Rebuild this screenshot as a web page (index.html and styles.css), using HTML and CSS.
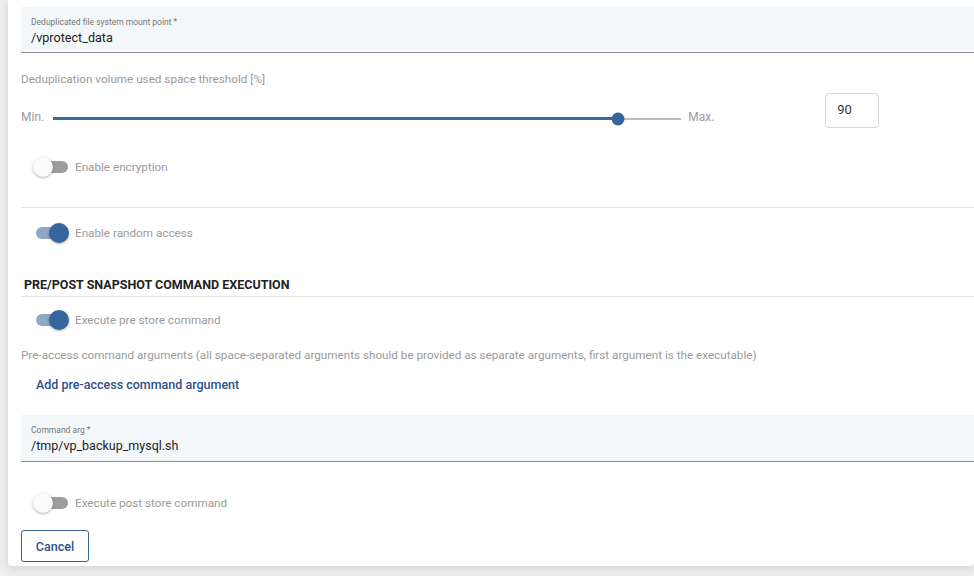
FILE: index.html
```html
<!DOCTYPE html>
<html>
<head>
<meta charset="utf-8">
<link rel="stylesheet" href="styles.css">
</head>
<body>
<div class="card">
  <div class="field">
    <div class="field-label">Deduplicated file system mount point *</div>
    <div class="field-value">/vprotect_data</div>
  </div>

  <div class="hint slider-title">Deduplication volume used space threshold [%]</div>
  <div class="slider-row">
    <span class="minmax">Min.</span>
    <div class="track">
      <div class="track-fill" style="width: 90%"></div>
      <div class="thumb" style="left: 90%"></div>
    </div>
    <span class="minmax">Max.</span>
    <div class="num-input">90</div>
  </div>

  <div class="toggle-row first">
    <span class="toggle off"><span class="knob"></span></span>
    <span class="toggle-label">Enable encryption</span>
  </div>
  <div class="divider"></div>
  <div class="toggle-row">
    <span class="toggle on"><span class="knob"></span></span>
    <span class="toggle-label">Enable random access</span>
  </div>

  <div class="section-title">PRE/POST SNAPSHOT COMMAND EXECUTION</div>
  <div class="toggle-row pre">
    <span class="toggle on"><span class="knob"></span></span>
    <span class="toggle-label">Execute pre store command</span>
  </div>
  <div class="hint args">Pre-access command arguments (all space-separated arguments should be provided as separate arguments, first argument is the executable)</div>
  <div class="add-link">Add pre-access command argument</div>

  <div class="field cmd">
    <div class="field-label">Command arg *</div>
    <div class="field-value">/tmp/vp_backup_mysql.sh</div>
  </div>

  <div class="toggle-row post">
    <span class="toggle off"><span class="knob"></span></span>
    <span class="toggle-label">Execute post store command</span>
  </div>

  <button class="btn">Cancel</button>
</div>
</body>
</html>
```

FILE: styles.css
```css
html, body {
  margin: 0;
  padding: 0;
}
body {
  background: #eeeeee;
  font-family: Roboto, "Liberation Sans", sans-serif;
  width: 974px;
  height: 576px;
  overflow: hidden;
}
.card {
  margin-left: 8px;
  width: 966px;
  height: 566px;
  box-sizing: border-box;
  background: #fff;
  border-radius: 0 0 4px 4px;
  box-shadow: 0 2px 8px rgba(0,0,0,0.12);
  padding: 7px 0 0 13px;
  display: flex;
  flex-direction: column;
}
.field {
  background: #f4f7fa;
  border-bottom: 1px solid #8a8d91;
  height: 46px;
  box-sizing: border-box;
  padding: 10px 0 0 10px;
}
.field-label {
  font-size: 8.5px;
  color: #777;
  line-height: 10px;
}
.field-value {
  font-size: 12.6px;
  color: #222;
  line-height: 16px;
  margin-top: 3px;
}
.hint {
  font-size: 11.7px;
  color: #9a9a9a;
  line-height: 14px;
}
.slider-title {
  margin-top: 19px;
}
.slider-row {
  display: flex;
  align-items: center;
  height: 34px;
  margin-top: 9px;
}
.minmax {
  font-size: 12px;
  color: #9a9a9a;
  margin-top: 9px;
}
.track {
  position: relative;
  width: 628px;
  height: 2px;
  background: #bdbdbd;
  margin: 0 7px 0 9px;
  margin-top: 13px;
}
.track-fill {
  position: absolute;
  left: 0;
  top: -0.5px;
  height: 3px;
  background: #3a6aa2;
}
.thumb {
  position: absolute;
  top: 1px;
  width: 13px;
  height: 13px;
  border-radius: 50%;
  background: #36649c;
  transform: translate(-50%, -50%);
}
.num-input {
  margin-left: 111px;
  margin-bottom: 4px;
  width: 54px;
  height: 35px;
  box-sizing: border-box;
  border: 1px solid #d3d6da;
  border-radius: 4px;
  font-size: 13px;
  color: #333;
  padding: 8px 0 0 11px;
}
.toggle-row {
  display: flex;
  align-items: center;
  height: 20px;
  padding-left: 15px;
}
.toggle-row.first {
  margin-top: 28px;
}
.divider {
  height: 1px;
  background: #e3e3e3;
  margin-top: 30px;
  margin-bottom: 15px;
}
.toggle {
  position: relative;
  width: 32px;
  height: 12px;
  border-radius: 6px;
  margin-right: 7px;
}
.toggle.off {
  background: #9e9e9e;
}
.toggle.on {
  background: #8fa8c8;
}
.knob {
  position: absolute;
  top: -4px;
  width: 20px;
  height: 20px;
  border-radius: 50%;
  box-shadow: 0 1px 3px rgba(0,0,0,0.3);
}
.toggle.off .knob {
  left: -3px;
  background: #fafafa;
}
.toggle.on .knob {
  left: 13px;
  background: #36649c;
}
.toggle-label {
  font-size: 11.7px;
  color: #9a9a9a;
}
.section-title {
  margin-top: 35px;
  padding-left: 3px;
  font-size: 12.5px;
  font-weight: 700;
  color: #222;
  line-height: 14px;
  padding-bottom: 4px;
  border-bottom: 1px solid #e3e3e3;
}
.toggle-row.pre {
  margin-top: 13px;
}
.args {
  margin-top: 18px;
}
.add-link {
  margin-top: 16px;
  padding-left: 15px;
  font-size: 12.5px;
  font-weight: 500;
  color: #2d4f8a;
  line-height: 14px;
}
.field.cmd {
  margin-top: 23px;
  height: 47px;
  padding-top: 10px;
}
.field.cmd .field-value {
  font-size: 12.5px;
}
.toggle-row.post {
  margin-top: 31px;
}
.btn {
  align-self: flex-start;
  margin-top: 17px;
  width: 68px;
  height: 32px;
  background: #fff;
  border: 1px solid #36649c;
  border-radius: 3px;
  font-family: Roboto, "Liberation Sans", sans-serif;
  font-size: 12.5px;
  font-weight: 500;
  color: #2d4f8a;
  padding: 0;
}
```
